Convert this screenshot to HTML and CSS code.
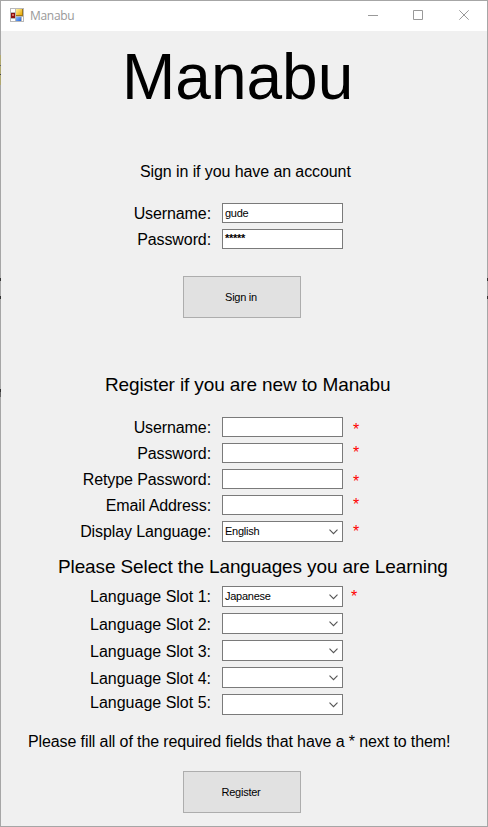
FILE: index.html
```html
<!DOCTYPE html>
<html lang="en">
<head>
<meta charset="utf-8">
<title>Manabu</title>
<link rel="stylesheet" href="styles.css">
</head>
<body>
<main class="window">
  <header class="titlebar">
    <svg class="app-icon" width="14" height="14" viewBox="0 0 14 14">
      <defs>
        <linearGradient id="gold" x2="1" y2="1"><stop stop-color="#fff0a0"/><stop offset="1" stop-color="#eaa800"/></linearGradient>
        <linearGradient id="blue" x2="1" y2="1"><stop stop-color="#8bbcff"/><stop offset="1" stop-color="#2866d8"/></linearGradient>
      </defs>
      <path fill="#b8b8b8" d="M0 0h14v14H0z"/>
      <path fill="#fff" d="M1 1h4v3H1zM1 11h4v2H1zM12 9h1v4h-1z"/>
      <path fill="#a07818" d="M6 1h7v7H6z"/><path fill="url(#gold)" d="M6 1h6v6H6z"/>
      <path fill="#8c1010" d="M1 5h4v5H1z"/><path fill="#d86860" d="M2 6h2v2H2z"/>
      <path fill="url(#blue)" d="M6 9h5v4H6z"/>
    </svg>
    <span class="caption">Manabu</span>
    <svg class="controls" width="102" height="10" viewBox="0 0 102 10" fill="none" stroke="#999">
      <path d="M0 5.5h10M45.5.5h9v9h-9zM91.3.3l9.4 9.4M100.7.3l-9.4 9.4"/>
    </svg>
  </header>

  <h1 class="title">Manabu</h1>

  <form class="signin">
    <h2 class="lead">Sign in if you have an account</h2>
    <div class="row"><span class="label">Username:</span><span class="field">gude</span></div>
    <div class="row"><span class="label">Password:</span><span class="field masked">*****</span></div>
    <button class="button" type="button">Sign in</button>
  </form>

  <form class="register">
    <h2 class="heading">Register if you are new to Manabu</h2>
    <div class="row"><span class="label">Username:</span><span class="field"></span><span class="star">*</span></div>
    <div class="row"><span class="label">Password:</span><span class="field"></span><span class="star high">*</span></div>
    <div class="row"><span class="label">Retype Password:</span><span class="field"></span><span class="star">*</span></div>
    <div class="row"><span class="label">Email Address:</span><span class="field"></span><span class="star high">*</span></div>
    <div class="row"><span class="label">Display Language:</span><span class="field select">English<svg class="chevron" viewBox="0 0 9 6"><path d="M.5.7l4 4 4-4"/></svg></span><span class="star mid">*</span></div>

    <h2 class="heading languages">Please Select the Languages you are Learning</h2>
    <div class="row slot"><span class="label">Language Slot 1:</span><span class="field select">Japanese<svg class="chevron" viewBox="0 0 9 6"><path d="M.5.7l4 4 4-4"/></svg></span><span class="star near">*</span></div>
    <div class="row slot"><span class="label lower">Language Slot 2:</span><span class="field select"><svg class="chevron" viewBox="0 0 9 6"><path d="M.5.7l4 4 4-4"/></svg></span></div>
    <div class="row slot"><span class="label lower">Language Slot 3:</span><span class="field select"><svg class="chevron" viewBox="0 0 9 6"><path d="M.5.7l4 4 4-4"/></svg></span></div>
    <div class="row slot"><span class="label lower">Language Slot 4:</span><span class="field select"><svg class="chevron" viewBox="0 0 9 6"><path d="M.5.7l4 4 4-4"/></svg></span></div>
    <div class="row slot"><span class="label upper">Language Slot 5:</span><span class="field select"><svg class="chevron" viewBox="0 0 9 6"><path d="M.5.7l4 4 4-4"/></svg></span></div>

    <p class="note">Please fill all of the required fields that have a * next to them!</p>
    <button class="button" type="button">Register</button>
  </form>
</main>
</body>
</html>
```
FILE: styles.css
```css
* { box-sizing: border-box; }
body { margin: 0; overflow: hidden; }
.window {
  width: 488px;
  height: 827px;
  padding: 1px;
  background:
    linear-gradient(#a6a6a6, #a6a6a6) top / 100% 1px no-repeat,
    linear-gradient(#a6a6a6, #a6a6a6) bottom / 100% 1px no-repeat,
    linear-gradient(#a6a6a6 55px, #b0a870 55px 65px, #666 65px 66px, #b0a870 66px 74px, #444 74px 75px, #b0a870 75px 85px, #a6a6a6 85px 278px, #333 278px 281px, #a6a6a6 281px 296px, #333 296px 299px, #a6a6a6 299px 389px, #333 389px 392px, #666 392px 397px, #a6a6a6 397px) left / 1px 100% no-repeat,
    linear-gradient(#a6a6a6 278px, #333 278px 281px, #a6a6a6 281px 296px, #333 296px 299px, #a6a6a6 299px) right / 1px 100% no-repeat,
    #f0f0f0;
  color: #000;
  font: 16px/20px "Liberation Sans", Arial, sans-serif;
  white-space: nowrap;
}
h1, h2, p { margin: 0; font-weight: 400; }
.titlebar {
  display: flex;
  align-items: center;
  height: 30px;
  padding: 0 17px 2px 9px;
  background: #fff;
}
.caption {
  flex: 1;
  margin: 1px 0 0 6px;
  color: #999;
  font: 12px/16px "Open Sans", sans-serif;
  letter-spacing: -0.3px;
}
.title {
  height: 127px;
  padding: 10px 0 0 121px;
  font-size: 64px;
  line-height: 73px;
}
.lead {
  height: 45px;
  padding: 4px 0 0 139px;
  font-size: 16px;
  letter-spacing: -0.09px;
}
.row {
  display: grid;
  grid-template-columns: 210px 121px auto;
  column-gap: 11px;
  height: 26px;
  align-items: start;
}
.row.slot { height: 27px; }
.label { padding-top: 1px; text-align: right; letter-spacing: -0.1px; }
.slot .label { letter-spacing: 0; }
.label.lower { padding-top: 2px; }
.label.upper { padding-top: 0; margin-top: -1px; }
.field {
  display: block;
  height: 20px;
  padding-left: 2px;
  border: 1px solid #7a7a7a;
  background: #fff;
  font-size: 11px;
  line-height: 18px;
  letter-spacing: -0.25px;
}
.masked { line-height: 17px; font-weight: 700; }
.select { display: flex; justify-content: space-between; height: 21px; padding-right: 4px; }
.chevron { width: 9px; height: 6px; margin: 7px 0 0 auto; fill: none; stroke: #555; stroke-width: 1.1; }
.star { color: #f00; padding-top: 3px; margin-left: -1px; }
.star.high { padding-top: 0; }
.star.mid { padding-top: 1px; }
.star.near { margin-left: -3px; padding-top: 1px; }
.button {
  display: block;
  width: 118px;
  height: 42px;
  margin: 21px 0 0 182px;
  padding: 0 2px 0 0;
  border: 1px solid #adadad;
  background: #e1e1e1;
  color: #000;
  font: 11px/14px "Liberation Sans", Arial, sans-serif;
  letter-spacing: -0.25px;
}
.register { padding-top: 56px; }
.heading {
  height: 43px;
  padding-left: 104px;
  font-size: 19px;
  line-height: 22px;
  letter-spacing: -0.12px;
}
.languages { height: 39px; padding: 9px 0 0 57px; }
.note { padding: 11px 0 0 27px; letter-spacing: -0.11px; }
.note + .button { margin-top: 19px; }
```
